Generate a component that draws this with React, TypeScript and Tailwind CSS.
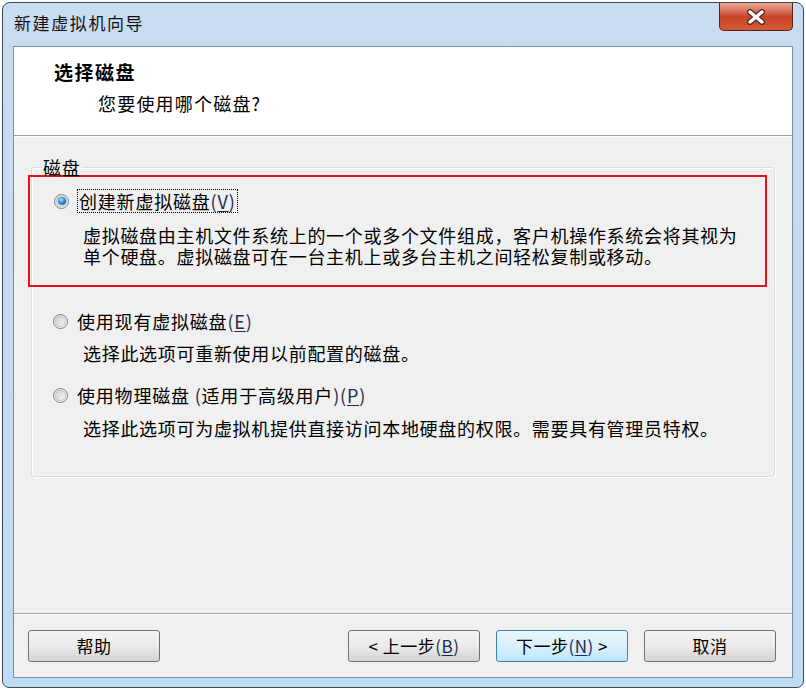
import type { ReactNode } from "react";

const cjk = "font-['Noto_Sans_CJK_SC','Noto_Sans',sans-serif]";

const Radio = ({ checked }: { checked?: boolean }) => (
  <div className="flex h-[15px] w-[15px] shrink-0 items-center justify-center rounded-full border border-[#7d8184] bg-gradient-to-br from-[#dcdcdc] to-[#f8f8f8]">
    <div className="flex h-[11px] w-[11px] items-center justify-center rounded-full border border-[#c4c4c4] bg-gradient-to-br from-[#cfcfcf] to-[#f6f6f6]">
      {checked && (
        <div className="h-[8px] w-[8px] rounded-full bg-[radial-gradient(circle_at_40%_35%,#a8e4ff_0%,#2f8fd8_45%,#0b4f96_100%)]" />
      )}
    </div>
  </div>
);

const Key = ({ k }: { k: string }) => (
  <span className="text-[#1e2c52]">
    (<span className="underline underline-offset-2">{k}</span>)
  </span>
);

const Button = ({
  children,
  primary,
}: {
  children: ReactNode;
  primary?: boolean;
}) => (
  <button
    className={`flex h-[32px] w-[132px] items-center justify-center rounded-[3px] border text-[17px] tracking-[0.5px] text-black ${
      primary
        ? "border-[#3c7fb1] bg-gradient-to-b from-[#eaf6fd] via-[#d9f0fc] to-[#bee6fd]"
        : "border-[#707070] bg-gradient-to-b from-[#f2f2f2] via-[#ebebeb] to-[#d4d4d4]"
    }`}
  >
    <span>{children}</span>
  </button>
);

export default function App() {
  return (
    <div className={`h-[690px] w-[806px] bg-white p-[2px] ${cjk}`}>
      <div className="flex h-[686px] w-[802px] flex-col rounded-t-[8px] rounded-b-[7px] border border-[#3b4858] bg-gradient-to-b from-[#c9ddf2] via-[#c3daf1] to-[#c0dcf5] px-[10px] pb-[9px]">
        {/* title bar */}
        <div className="flex h-[43px] items-start justify-between">
          <div className="mt-[8px] pl-[1px] text-[17px] leading-[24px] tracking-[1.6px] text-[#111]">
            新建虚拟机向导
          </div>
          <div className="flex h-[28px] w-[74px] items-center justify-center rounded-b-[5px] border border-t-0 border-[#5a2418] bg-gradient-to-b from-[#e9a99a] via-[#c9452a] to-[#d55a32]">
            <svg width="20" height="16" viewBox="0 0 20 16">
              <path d="M4 3 L16 13 M16 3 L4 13" stroke="#5a2a22" strokeWidth="6" strokeLinecap="round" />
              <path d="M4 3 L16 13 M16 3 L4 13" stroke="#ffffff" strokeWidth="3.4" strokeLinecap="round" />
            </svg>
          </div>
        </div>

        {/* client area */}
        <div className="flex flex-1 flex-col border border-[#7b8ea3] bg-[#f0f0f0]">
          <div className="h-[89px] border-b border-[#a0a0a0] bg-white pl-[40px] pt-[12px]">
            <div className="text-[19px] font-bold leading-[26px] tracking-[1.5px] text-black">
              选择磁盘
            </div>
            <div className="mt-[5px] pl-[44px] text-[18px] leading-[26px] tracking-[1.2px] text-black">
              您要使用哪个磁盘?
            </div>
          </div>

          <div className="flex-1 border-t border-white px-[17px] pt-[20px]">
            <fieldset className="rounded-[3px] border border-[#d5dfe5] pb-[37px] shadow-[inset_1px_1px_0_#fff,1px_1px_0_#fff]">
              <legend className="ml-[10px] px-[1px] text-[18px] leading-[20px] tracking-[0.8px] text-black">
                磁盘
              </legend>

              <div className="-ml-[4px] mr-[7px] mt-[-2px] border-2 border-[#e8101c] pb-[18px] pl-[24px] pt-[12px]">
                <div className="flex h-[24px] items-center gap-[8px]">
                  <Radio checked />
                  <div className="flex h-[24px] items-center border border-dotted border-black px-[1px] text-[18px] tracking-[0.8px] text-black">
                    创建新虚拟磁盘<Key k="V" />
                  </div>
                </div>
                <div className="mt-[12px] pl-[29px] text-[18px] leading-[21px] tracking-[0.7px] text-black">
                  <div>虚拟磁盘由主机文件系统上的一个或多个文件组成，客户机操作系统会将其视为</div>
                  <div>单个硬盘。虚拟磁盘可在一台主机上或多台主机之间轻松复制或移动。</div>
                </div>
              </div>

              <div className="mt-[22px] pl-[21px]">
                <div className="flex h-[24px] items-center gap-[9px]">
                  <Radio />
                  <div className="text-[18px] tracking-[0.8px] text-black">
                    使用现有虚拟磁盘<Key k="E" />
                  </div>
                </div>
                <div className="mt-[10px] pl-[30px] text-[18px] leading-[21px] tracking-[0.7px] text-black">
                  选择此选项可重新使用以前配置的磁盘。
                </div>
              </div>

              <div className="mt-[19px] pl-[21px]">
                <div className="flex h-[24px] items-center gap-[9px]">
                  <Radio />
                  <div className="text-[18px] tracking-[0.8px] text-black">
                    使用物理磁盘 <span className="text-[#1e2c52]">(</span>适用于高级用户
                    <span className="text-[#1e2c52]">)</span>
                    <Key k="P" />
                  </div>
                </div>
                <div className="mt-[11px] pl-[30px] text-[18px] leading-[21px] tracking-[0.7px] text-black">
                  选择此选项可为虚拟机提供直接访问本地硬盘的权限。需要具有管理员特权。
                </div>
              </div>
            </fieldset>
          </div>

          <div className="flex h-[64px] items-center border-t border-[#a0a0a0] pl-[14px] pr-[16px] shadow-[inset_0_1px_0_#fff]">
            <Button>帮助</Button>
            <div className="ml-auto flex gap-[16px]">
              <Button>
                &lt; 上一步<Key k="B" />
              </Button>
              <Button primary>
                下一步<Key k="N" /> &gt;
              </Button>
              <Button>取消</Button>
            </div>
          </div>
        </div>
      </div>
    </div>
  );
}
